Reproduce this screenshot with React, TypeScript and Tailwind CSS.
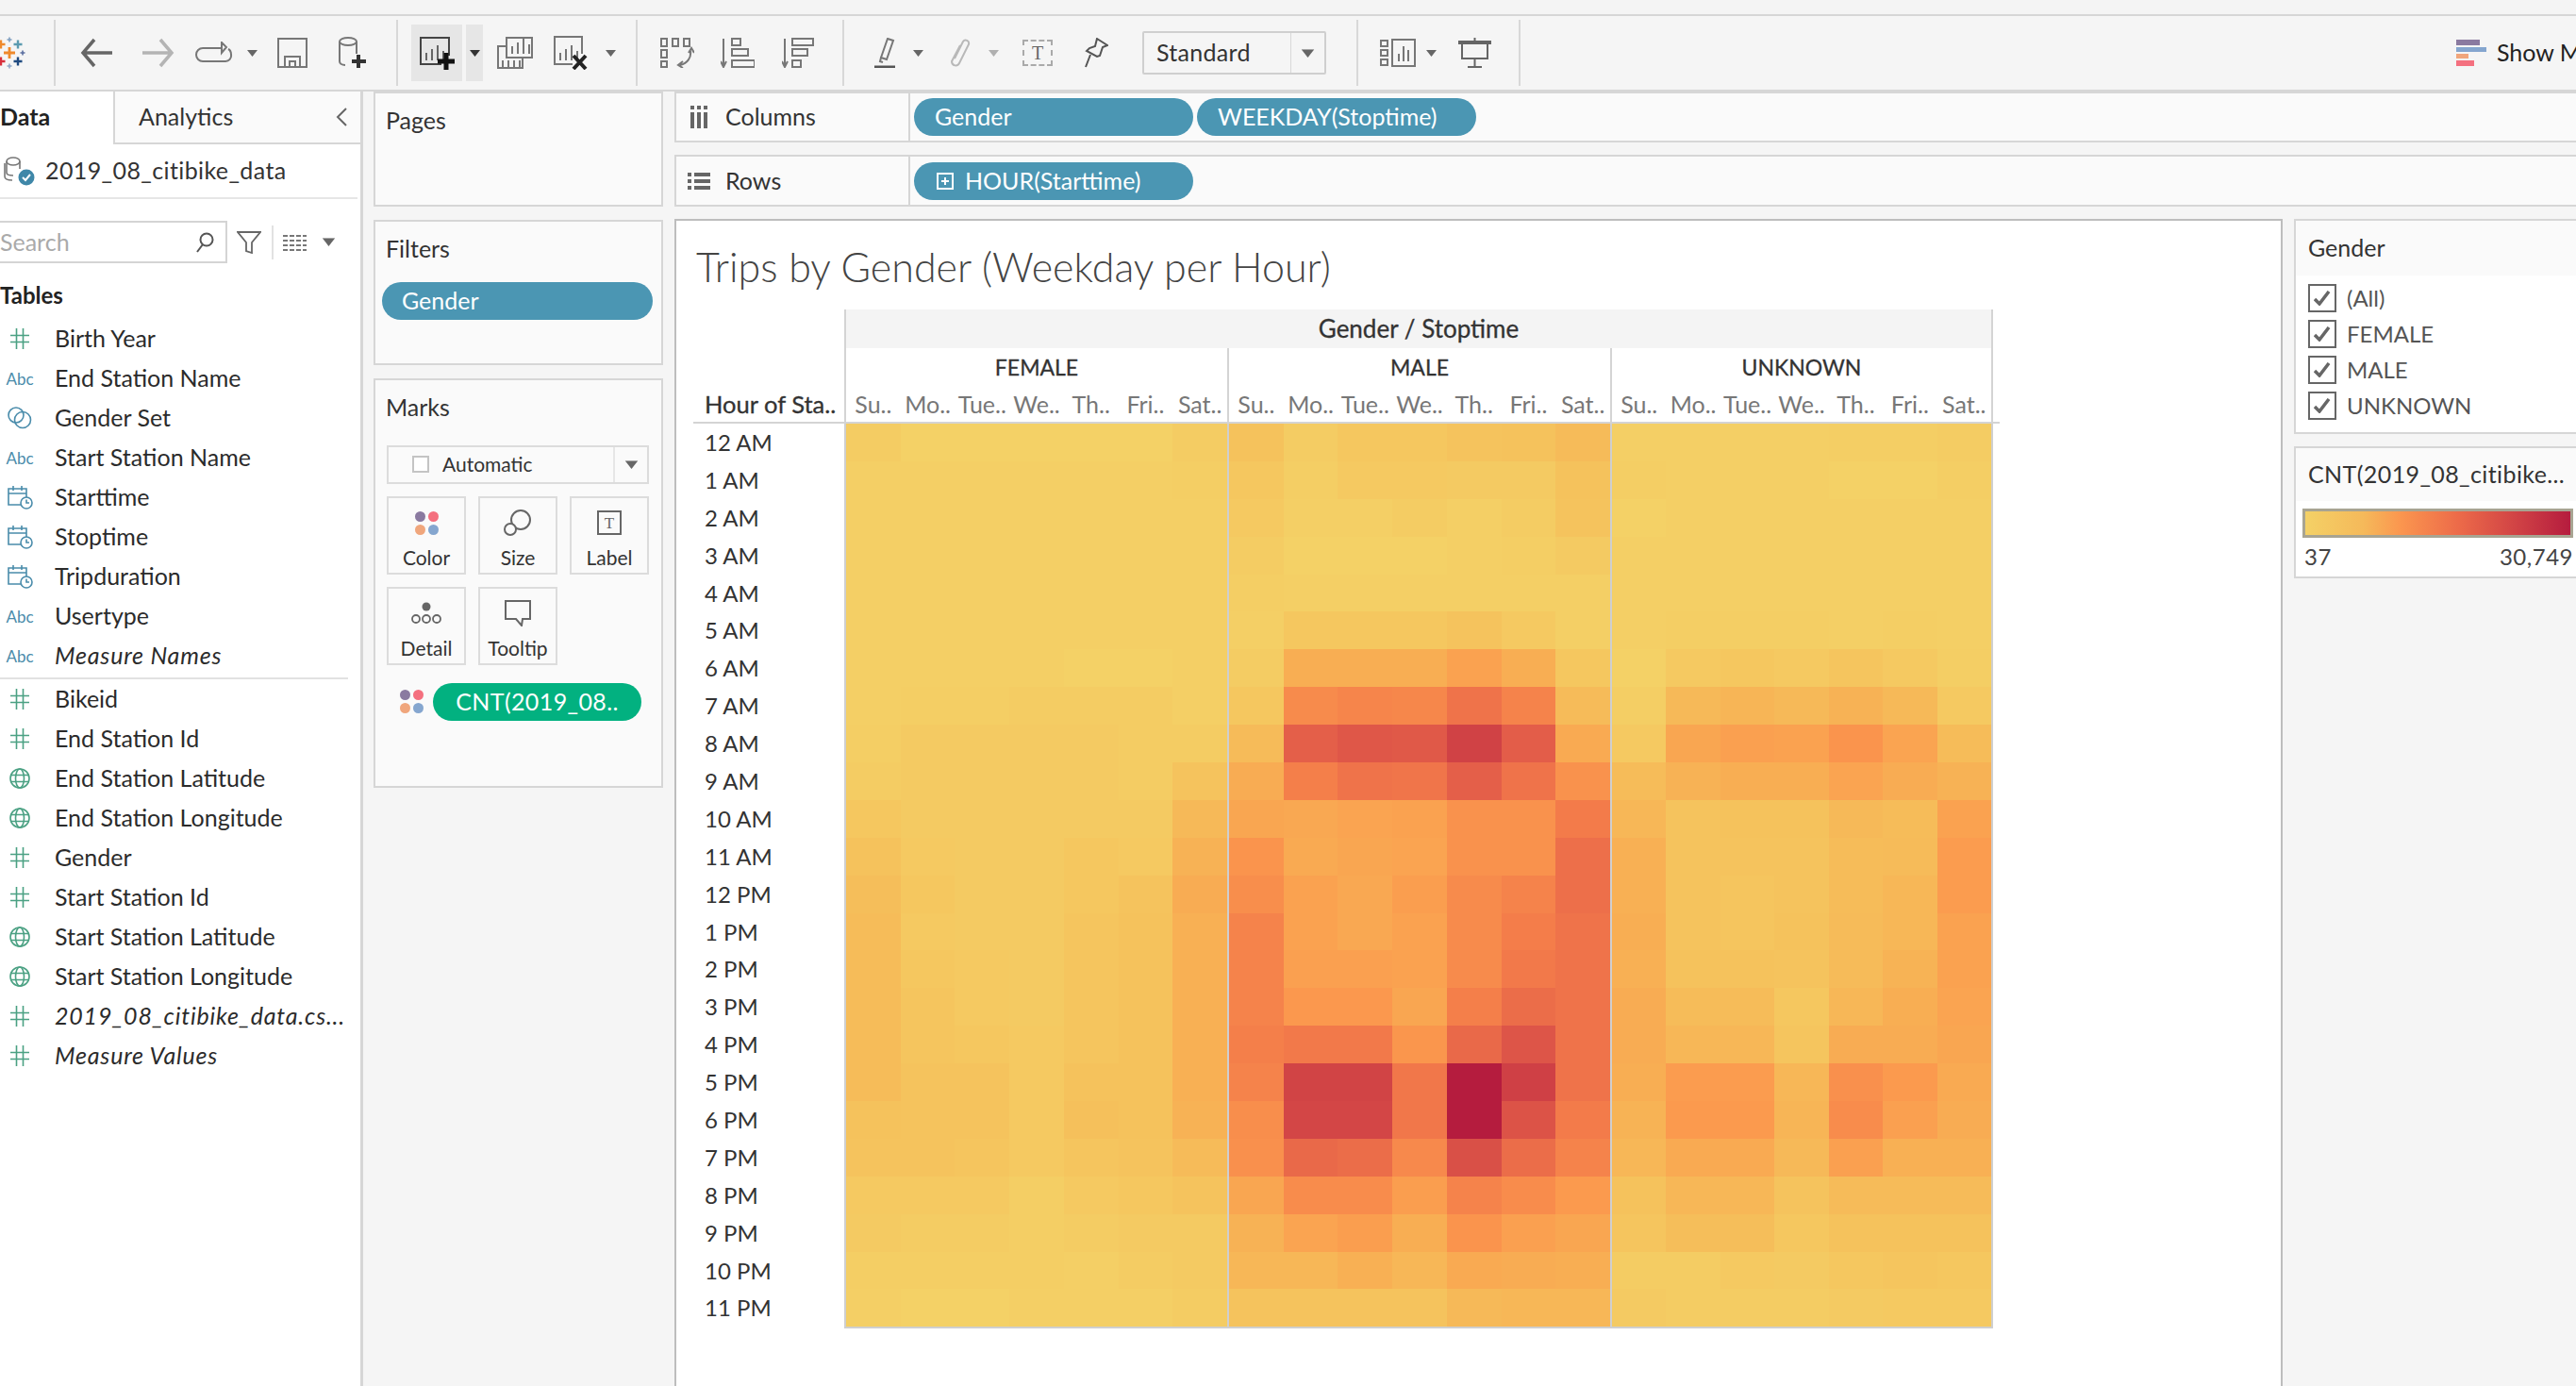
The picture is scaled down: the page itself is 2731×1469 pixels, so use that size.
import type { ReactNode } from 'react'

// value scale sampled from the legend, 0-100
const STOPS: Array<[number, number[]]> = [
  [0, [244, 209, 102]],
  [10, [245, 192, 91]],
  [20, [248, 174, 83]],
  [30, [251, 154, 78]],
  [45, [244, 125, 74]],
  [60, [228, 95, 73]],
  [75, [208, 66, 69]],
  [100, [181, 28, 62]],
]

function heat(v: number) {
  for (let i = 1; i < STOPS.length; i++) {
    const [b, cb] = STOPS[i]
    const [a, ca] = STOPS[i - 1]
    if (v <= b) {
      const t = (v - a) / (b - a)
      return `rgb(${ca.map((c, k) => Math.round(c + (cb[k] - c) * t)).join(',')})`
    }
  }
  return 'rgb(181,28,62)'
}

const FEMALE = [
  [3, 0, 0, 0, 0, 0, 3], [1, 1, 1, 1, 1, 1, 2], [1, 1, 1, 1, 1, 1, 1], [1, 1, 1, 1, 1, 1, 1],
  [1, 1, 1, 1, 1, 1, 1], [1, 1, 1, 1, 1, 1, 1], [1, 1, 1, 1, 0, 0, 1], [1, 2, 2, 3, 3, 3, 1],
  [2, 4, 4, 4, 4, 3, 3], [3, 4, 4, 4, 4, 3, 8], [6, 4, 4, 4, 4, 4, 14], [9, 5, 4, 4, 6, 5, 18],
  [11, 6, 4, 4, 6, 8, 21], [12, 5, 4, 4, 7, 9, 19], [12, 6, 5, 4, 7, 9, 19], [12, 7, 5, 4, 7, 9, 19],
  [12, 7, 6, 5, 7, 9, 19], [12, 8, 8, 5, 9, 9, 19], [9, 8, 8, 5, 10, 9, 18], [8, 8, 7, 5, 7, 8, 13],
  [5, 5, 5, 2, 5, 6, 8], [4, 3, 3, 2, 3, 4, 4], [2, 2, 2, 2, 1, 3, 4], [1, 0, 0, 1, 1, 1, 3],
]
const MALE = [
  [9, 3, 6, 6, 8, 9, 13], [6, 2, 5, 5, 4, 4, 9], [5, 1, 1, 3, 1, 3, 8], [3, 0, 0, 0, 1, 2, 4],
  [2, 1, 1, 1, 1, 1, 1], [1, 6, 6, 6, 8, 5, 1], [3, 20, 20, 20, 26, 20, 6], [6, 38, 41, 40, 50, 42, 13],
  [13, 60, 64, 63, 75, 61, 22], [21, 44, 50, 49, 60, 50, 34], [24, 23, 25, 26, 34, 34, 46], [33, 22, 24, 25, 34, 34, 52],
  [36, 26, 23, 28, 38, 42, 52], [42, 26, 23, 26, 38, 45, 50], [42, 27, 27, 26, 38, 47, 50], [42, 31, 31, 24, 44, 53, 50],
  [44, 47, 47, 32, 55, 65, 50], [42, 74, 74, 48, 100, 76, 50], [36, 73, 73, 48, 100, 66, 46], [35, 55, 53, 39, 68, 53, 42],
  [24, 37, 37, 28, 42, 37, 30], [18, 25, 28, 20, 33, 27, 24], [15, 15, 19, 15, 22, 21, 20], [8, 8, 8, 8, 14, 15, 15],
]
const UNKNOWN = [
  [1, 1, 1, 1, 2, 2, 3], [2, 1, 1, 1, 0, 0, 2], [0, 1, 1, 1, 1, 1, 1], [1, 1, 1, 1, 1, 1, 1],
  [1, 1, 1, 1, 1, 1, 1], [1, 2, 2, 2, 1, 2, 1], [0, 5, 6, 5, 7, 5, 2], [2, 14, 16, 14, 18, 14, 5],
  [5, 24, 27, 26, 33, 25, 12], [12, 18, 20, 20, 25, 21, 18], [15, 8, 9, 9, 14, 12, 26], [19, 8, 8, 8, 12, 13, 29],
  [19, 8, 7, 8, 12, 15, 29], [20, 8, 7, 9, 13, 15, 26], [19, 9, 9, 8, 13, 17, 26], [21, 12, 12, 6, 15, 20, 25],
  [21, 15, 15, 7, 21, 21, 24], [20, 29, 29, 15, 35, 30, 22], [17, 30, 30, 16, 37, 27, 21], [15, 22, 22, 14, 27, 19, 19],
  [9, 15, 15, 8, 13, 13, 13], [7, 11, 11, 6, 9, 9, 9], [3, 3, 5, 4, 6, 7, 6], [4, 3, 3, 3, 4, 5, 5],
]

const HOURS = ['12 AM', '1 AM', '2 AM', '3 AM', '4 AM', '5 AM', '6 AM', '7 AM', '8 AM', '9 AM', '10 AM', '11 AM', '12 PM', '1 PM', '2 PM', '3 PM', '4 PM', '5 PM', '6 PM', '7 PM', '8 PM', '9 PM', '10 PM', '11 PM']
const DAYS = ['Su..', 'Mo..', 'Tue..', 'We..', 'Th..', 'Fri..', 'Sat..']

type FieldIcon = 'hash' | 'abc' | 'set' | 'date' | 'geo'

const DIMENSIONS: Array<{ icon: FieldIcon; label: string; italic?: boolean }> = [
  { icon: 'hash', label: 'Birth Year' },
  { icon: 'abc', label: 'End Station Name' },
  { icon: 'set', label: 'Gender Set' },
  { icon: 'abc', label: 'Start Station Name' },
  { icon: 'date', label: 'Starttime' },
  { icon: 'date', label: 'Stoptime' },
  { icon: 'date', label: 'Tripduration' },
  { icon: 'abc', label: 'Usertype' },
  { icon: 'abc', label: 'Measure Names', italic: true },
]
const MEASURES: Array<{ icon: FieldIcon; label: string; italic?: boolean }> = [
  { icon: 'hash', label: 'Bikeid' },
  { icon: 'hash', label: 'End Station Id' },
  { icon: 'geo', label: 'End Station Latitude' },
  { icon: 'geo', label: 'End Station Longitude' },
  { icon: 'hash', label: 'Gender' },
  { icon: 'hash', label: 'Start Station Id' },
  { icon: 'geo', label: 'Start Station Latitude' },
  { icon: 'geo', label: 'Start Station Longitude' },
  { icon: 'hash', label: '2019_08_citibike_data.cs...', italic: true },
  { icon: 'hash', label: 'Measure Values', italic: true },
]

function Sep({ className }: { className: string }) {
  return <div className={`h-[70px] w-[2px] shrink-0 bg-[#d8d8d8] ${className}`} />
}

function Caret({ className = '', color = '#666' }: { className?: string; color?: string }) {
  return (
    <svg width="11" height="7" viewBox="0 0 11 7" className={`shrink-0 ${className}`}>
      <path d="M0 0h11L5.5 7z" fill={color} />
    </svg>
  )
}

function Logo() {
  const plus = (x: number, y: number, s: number, c: string, w = 2.4) => (
    <path key={`${x}-${y}`} d={`M${x - s} ${y}h${s * 2}M${x} ${y - s}v${s * 2}`} stroke={c} strokeWidth={w} fill="none" />
  )
  return (
    <svg width="34" height="34" viewBox="0 0 34 34" className="-ml-[7px] shrink-0">
      {plus(17, 17, 6, '#ef8a2c', 2.8)}
      {plus(26, 8, 4.5, '#5b9bb0')}
      {plus(8, 8, 4.5, '#ef8a2c')}
      {plus(17, 3, 2.5, '#7f9fc0', 1.6)}
      {plus(31, 17, 2.5, '#5b6fa0', 1.6)}
      {plus(3, 17, 2.5, '#e0a030', 1.6)}
      {plus(8, 26, 4.5, '#d8303c')}
      {plus(26, 26, 4.5, '#1f4a80')}
      {plus(17, 31, 2.5, '#8fa8c8', 1.6)}
    </svg>
  )
}

function BarChartGlyph({ x, y, color = '#555' }: { x: number; y: number; color?: string }) {
  return (
    <path
      d={`M${x} ${y + 14}v-8M${x + 6} ${y + 14}v-12M${x + 12} ${y + 14}v-16M${x + 18} ${y + 14}v-10`}
      stroke={color}
      strokeWidth="2"
      fill="none"
    />
  )
}

function Toolbar() {
  return (
    <div className="flex h-[80px] shrink-0 items-center border-b-2 border-[#d6d6d6] bg-[#f5f5f5]">
      <Logo />
      <Sep className="ml-[30px]" />
      {/* back / forward */}
      <svg width="36" height="32" viewBox="0 0 36 32" className="ml-[26px] shrink-0" fill="none" stroke="#666" strokeWidth="3.5">
        <path d="M34 16H3M15 2 3 16l12 14" />
      </svg>
      <svg width="36" height="32" viewBox="0 0 36 32" className="ml-[28px] shrink-0" fill="none" stroke="#b4b4b4" strokeWidth="3.5">
        <path d="M2 16h31M21 2l12 14-12 14" />
      </svg>
      <svg width="42" height="24" viewBox="0 0 42 24" className="ml-[21px] shrink-0" fill="none" stroke="#777" strokeWidth="2">
        <path d="M29 7H9a6 6 0 0 0 0 14h24a6 6 0 0 0 6-7c0-3-1-5-3-6M29 1v11l5-6z" />
      </svg>
      <Caret className="ml-[14px]" />
      {/* save */}
      <svg width="32" height="32" viewBox="0 0 32 32" className="ml-[21px] shrink-0" fill="none" stroke="#777" strokeWidth="2">
        <path d="M1 1h30v30H1zM8 31V20h16v11M13 31v-6h6v6" />
      </svg>
      {/* new data source */}
      <svg width="30" height="34" viewBox="0 0 30 34" className="ml-[32px] shrink-0" fill="none" stroke="#777" strokeWidth="2">
        <ellipse cx="11" cy="5" rx="9" ry="4" />
        <path d="M2 5v21c0 2 2 4 6 4M20 5v13" />
        <path d="M22 19v14M15 26h15" stroke="#333" strokeWidth="4" />
      </svg>
      <Sep className="ml-[32px]" />
      {/* new worksheet */}
      <div className="ml-[14px] flex h-[60px] w-[54px] shrink-0 items-center justify-center bg-[#e6e6e6]">
        <svg width="38" height="36" viewBox="0 0 38 36" fill="none">
          <path d="M24 30H2V2h30v19" stroke="#444" strokeWidth="2" />
          <BarChartGlyph x={8} y={12} color="#666" />
          <path d="M29 18v18M20 27h18" stroke="#111" strokeWidth="5" />
        </svg>
      </div>
      <div className="ml-[4px] flex h-[60px] w-[18px] shrink-0 items-center justify-center bg-[#e6e6e6]">
        <Caret color="#333" />
      </div>
      {/* duplicate */}
      <svg width="38" height="34" viewBox="0 0 38 34" className="ml-[15px] shrink-0" fill="none" stroke="#777" strokeWidth="2">
        <path d="M10 1h27v21H10zM10 10H1v23h26V22" />
        <BarChartGlyph x={16} y={4} color="#777" />
        <path d="M6 32v-7M12 32v-7M18 32v-7M24 32v-7" />
      </svg>
      {/* clear */}
      <svg width="38" height="36" viewBox="0 0 38 36" className="ml-[22px] shrink-0" fill="none">
        <path d="M20 30H1V1h29v18" stroke="#777" strokeWidth="2" />
        <BarChartGlyph x={7} y={12} color="#777" />
        <path d="M21 21l13 14M34 21 21 35" stroke="#222" strokeWidth="4" />
      </svg>
      <Caret className="ml-[17px]" />
      <Sep className="ml-[21px]" />
      {/* swap */}
      <svg width="36" height="32" viewBox="0 0 36 32" className="ml-[24px] shrink-0" fill="none" stroke="#777" strokeWidth="2">
        <path d="M1 1h6v8H1zM13 1h6v8h-6zM25 1h6v8h-6zM1 13h6v8H1zM1 25h6v6H1z" />
        <path d="M32 14c1 7-3 13-11 15M30 16l3-5 3 5M24 25l-5 4 5 3" />
      </svg>
      {/* sort ascending */}
      <svg width="36" height="32" viewBox="0 0 36 32" className="ml-[28px] shrink-0" fill="none" stroke="#777" strokeWidth="2">
        <path d="M3 1v29M0 25l3 6 3-6" />
        <path d="M12 1h9v7h-9zM12 12h17v7H12zM12 24h24v7H12z" />
      </svg>
      {/* sort descending */}
      <svg width="34" height="32" viewBox="0 0 34 32" className="ml-[29px] shrink-0" fill="none" stroke="#777" strokeWidth="2">
        <path d="M3 1v29M0 25l3 6 3-6" />
        <path d="M11 1h22v7H11zM11 12h16v7H11zM11 24h9v7h-9z" />
      </svg>
      <Sep className="ml-[30px]" />
      {/* highlight */}
      <svg width="22" height="32" viewBox="0 0 22 32" className="ml-[32px] shrink-0" fill="none" stroke="#777" strokeWidth="2">
        <path d="M14 1l6 2-7 20-6-2zM7 21l-1 4 3 1" />
        <path d="M0 31h22" stroke="#555" strokeWidth="3" />
      </svg>
      <Caret className="ml-[19px]" />
      {/* annotate */}
      <svg width="24" height="32" viewBox="0 0 24 32" className="ml-[26px] shrink-0" fill="none" stroke="#b8b8b8" strokeWidth="2">
        <path d="M7 22 16 4c2-3 7-1 6 3L12 27c-2 4-8 3-8-2L13 8" />
      </svg>
      <Caret className="ml-[19px]" color="#b0b0b0" />
      {/* text box */}
      <div className="ml-[25px] flex h-[28px] w-[32px] shrink-0 items-center justify-center border-2 border-dashed border-[#aaa] font-['Liberation_Serif',serif] text-[20px] leading-none text-[#666]">
        T
      </div>
      {/* pin */}
      <svg width="26" height="32" viewBox="0 0 26 32" className="ml-[33px] shrink-0" fill="none" stroke="#555" strokeWidth="2">
        <path d="M14 1l11 7-5 2-3 9-3 1-11-6 3-3 6-2zM7 18l-5 13" />
      </svg>
      {/* view size */}
      <div className="ml-[36px] flex h-[46px] w-[195px] shrink-0 items-center rounded-[2px] border-2 border-[#cfcfcf] text-[25px] text-[#333]">
        <span className="ml-[13px] flex-1 tracking-[0.3px]">Standard</span>
        <div className="flex h-full w-[36px] items-center justify-center border-l border-[#d8d8d8]">
          <Caret className="scale-125" />
        </div>
      </div>
      <Sep className="ml-[32px]" />
      {/* show cards */}
      <svg width="38" height="30" viewBox="0 0 38 30" className="ml-[23px] shrink-0" fill="none" stroke="#777" strokeWidth="2">
        <path d="M1 2h7v6H1zM1 12h7v6H1zM1 22h7v6H1zM13 1h24v28H13z" />
        <path d="M20 24v-8M25 24V8M30 24V12" />
      </svg>
      <Caret className="ml-[11px]" />
      {/* presentation */}
      <svg width="35" height="32" viewBox="0 0 35 32" className="ml-[23px] shrink-0" fill="none" stroke="#666" strokeWidth="2">
        <path d="M0 5h35" strokeWidth="4" />
        <path d="M17.5 0v4M4 6v16h27V6M17.5 22v9M10 31h15" />
      </svg>
      <Sep className="ml-[29px]" />
      {/* show me */}
      <div className="ml-[992px] flex shrink-0 items-center">
        <div className="flex w-[32px] flex-col gap-[2px]">
          <div className="h-[6px] w-[25px] bg-[#8a7aa0]" />
          <div className="h-[5px] w-[32px] bg-[#85a6cf]" />
          <div className="h-[5px] w-[13px] bg-[#f0a67c]" />
          <div className="h-[6px] w-[19px] bg-[#f4707f]" />
        </div>
        <span className="ml-[11px] whitespace-nowrap text-[25px] text-[#222]">Show Me</span>
      </div>
    </div>
  )
}

function FieldGlyph({ icon }: { icon: FieldIcon }) {
  const green = '#4ba183'
  const blue = '#4a8cab'
  if (icon === 'abc') {
    return <span className="text-[17px] leading-none text-[#4a8cab]">Abc</span>
  }
  if (icon === 'hash') {
    return (
      <svg width="20" height="22" viewBox="0 0 20 22" fill="none" stroke={green} strokeWidth="1.6">
        <path d="M0 7.5h20M0 14.5h20M6.5 0v22M13.5 0v22" />
      </svg>
    )
  }
  if (icon === 'geo') {
    return (
      <svg width="22" height="22" viewBox="0 0 22 22" fill="none" stroke={green} strokeWidth="1.6">
        <circle cx="11" cy="11" r="10" />
        <ellipse cx="11" cy="11" rx="4.5" ry="10" />
        <path d="M1.5 7.5h19M1.5 14.5h19" />
      </svg>
    )
  }
  if (icon === 'set') {
    return (
      <svg width="26" height="24" viewBox="0 0 26 24" fill="none" stroke={blue} strokeWidth="1.6">
        <circle cx="9" cy="9" r="8" />
        <circle cx="16" cy="14" r="8.5" />
      </svg>
    )
  }
  return (
    <svg width="28" height="26" viewBox="0 0 28 26" fill="none" stroke={blue} strokeWidth="1.6">
      <path d="M16 21H2V4h19v10M2 9h19M7 1v5M16 1v5" />
      <circle cx="21" cy="19" r="6" fill="#fff" />
      <path d="M21 15.5V19h3" />
    </svg>
  )
}

function FieldRow({ icon, label, italic }: { icon: FieldIcon; label: string; italic?: boolean }) {
  return (
    <div className="flex h-[42px] items-center">
      <div className="flex w-[42px] shrink-0 items-center justify-center">
        <FieldGlyph icon={icon} />
      </div>
      <span className={`ml-[16px] whitespace-nowrap text-[25px] text-[#2b2b2b] ${italic ? 'italic tracking-[0.8px]' : ''}`}>{label}</span>
    </div>
  )
}

function DataPane() {
  return (
    <div className="flex w-[385px] shrink-0 flex-col border-r-[3px] border-[#d6d6d6] bg-white">
      <div className="flex h-[56px] shrink-0">
        <div className="flex w-[120px] items-center pb-[2px] text-[25px] font-bold text-[#222]">Data</div>
        <div className="flex flex-1 items-center justify-between border-b-2 border-l-2 border-[#d6d6d6] bg-[#fafafa] pl-[25px] pr-[14px] text-[25px] text-[#333]">
          Analytics
          <svg width="12" height="20" viewBox="0 0 12 20" fill="none" stroke="#666" strokeWidth="2">
            <path d="M11 1 2 10l9 9" />
          </svg>
        </div>
      </div>
      <div className="mr-[3px] flex h-[58px] shrink-0 items-center border-b-2 border-[#e6e6e6]">
        <svg width="34" height="32" viewBox="0 0 34 32" className="ml-[3px] shrink-0" fill="none" stroke="#777" strokeWidth="1.6">
          <ellipse cx="11" cy="6" rx="7" ry="4" />
          <path d="M4 6v12c0 2 3 3 7 3M18 6v8M2 8v14c0 3 3 4 8 4" />
          <circle cx="25" cy="23" r="8.5" fill="#3f87a8" stroke="none" />
          <path d="m21 23 3 3 5-6" stroke="#fff" strokeWidth="2" />
        </svg>
        <span className="ml-[11px] text-[25px] tracking-[0.4px] text-[#333]">2019_08_citibike_data</span>
      </div>
      {/* search and view controls */}
      <div className="mt-[23px] flex h-[45px] shrink-0 items-center">
        <div className="flex h-full w-[241px] shrink-0 items-center justify-between border-y-2 border-r-2 border-[#d4d4d4] pr-[12px] text-[25px] text-[#aaa]">
          Search
          <svg width="20" height="22" viewBox="0 0 20 22" fill="none" stroke="#555" strokeWidth="2">
            <circle cx="12" cy="8" r="6.5" />
            <path d="M8 13 2 21" />
          </svg>
        </div>
        <svg width="26" height="24" viewBox="0 0 26 24" className="ml-[10px] shrink-0" fill="none" stroke="#666" strokeWidth="1.8">
          <path d="M1 1h24L16 12v11l-6-2v-9z" />
        </svg>
        <div className="ml-[11px] h-[36px] w-[2px] shrink-0 bg-[#e2e2e2]" />
        <svg width="25" height="18" viewBox="0 0 25 18" className="ml-[10px] shrink-0" fill="none" stroke="#777" strokeWidth="2" strokeDasharray="5 2">
          <path d="M0 2h25M0 7h25M0 12h25M0 17h25" />
        </svg>
        <Caret className="ml-[18px] scale-125" />
      </div>
      <div className="mt-[20px] flex h-[28px] shrink-0 items-center text-[24px] font-bold text-[#222]">Tables</div>
      <div className="mt-[11px] flex flex-col">
        {DIMENSIONS.map((f) => (
          <FieldRow key={f.label} {...f} />
        ))}
      </div>
      <div className="mr-[13px] mt-[2px] h-[2px] bg-[#e2e2e2]" />
      <div className="flex flex-col">
        {MEASURES.map((f) => (
          <FieldRow key={f.label} {...f} />
        ))}
      </div>
    </div>
  )
}

function Pill({ children, className }: { children: ReactNode; className: string }) {
  return (
    <div className={`flex h-[40px] shrink-0 items-center rounded-[20px] bg-[#4b96b3] text-[25px] whitespace-nowrap text-white ${className}`}>
      {children}
    </div>
  )
}

function FourDots() {
  return (
    <div className="grid w-[25px] grid-cols-2 gap-[3px]">
      <div className="size-[11px] rounded-full bg-[#8a7aa0]" />
      <div className="size-[11px] rounded-full bg-[#f4707f]" />
      <div className="size-[11px] rounded-full bg-[#f0a67c]" />
      <div className="size-[11px] rounded-full bg-[#85a6cf]" />
    </div>
  )
}

function MarkButton({ label, children }: { label: string; children: ReactNode }) {
  return (
    <div className="flex h-[83px] w-[84px] flex-col items-center border-2 border-[#dcdcdc] text-[21px] text-[#333]">
      <div className="flex h-[46px] items-center justify-center pt-[8px]">{children}</div>
      <span className="mt-[2px]">{label}</span>
    </div>
  )
}

function SideCards() {
  return (
    <div className="ml-[11px] flex w-[307px] shrink-0 flex-col">
      <div className="h-[122px] shrink-0 border-2 border-[#d6d6d6] bg-[#fafafa] pl-[11px] pt-[10px] text-[25px] text-[#333]">Pages</div>
      <div className="mt-[14px] h-[154px] shrink-0 border-2 border-[#d6d6d6] bg-[#fafafa] text-[25px] text-[#333]">
        <div className="pl-[11px] pt-[10px]">Filters</div>
        <Pill className="ml-[7px] mt-[16px] w-[287px] pl-[21px]">Gender</Pill>
      </div>
      <div className="mt-[14px] h-[434px] shrink-0 border-2 border-[#d6d6d6] bg-[#fafafa] text-[#333]">
        <div className="pl-[11px] pt-[10px] text-[25px]">Marks</div>
        <div className="ml-[12px] mt-[21px] flex h-[41px] w-[278px] items-center border-2 border-[#dcdcdc] text-[21px]">
          <div className="ml-[25px] size-[18px] border-2 border-[#c4c4c4] bg-white" />
          <span className="ml-[14px] flex-1">Automatic</span>
          <div className="flex h-full w-[36px] items-center justify-center border-l-2 border-[#e6e6e6]">
            <Caret className="scale-125" />
          </div>
        </div>
        <div className="ml-[12px] mt-[13px] grid w-[278px] grid-cols-[84px_84px_84px] gap-x-[13px] gap-y-[13px]">
          <MarkButton label="Color">
            <FourDots />
          </MarkButton>
          <MarkButton label="Size">
            <svg width="30" height="28" viewBox="0 0 30 28" fill="none" stroke="#666" strokeWidth="2">
              <circle cx="18" cy="11" r="10" />
              <circle cx="7" cy="21" r="6" fill="#fafafa" />
            </svg>
          </MarkButton>
          <MarkButton label="Label">
            <div className="flex size-[26px] items-center justify-center border-2 border-[#666] font-['Liberation_Serif',serif] text-[17px] leading-none text-[#666]">T</div>
          </MarkButton>
          <MarkButton label="Detail">
            <svg width="32" height="24" viewBox="0 0 32 24" fill="none" stroke="#666" strokeWidth="1.8">
              <circle cx="16" cy="5" r="4.5" fill="#666" stroke="none" />
              <circle cx="5" cy="18" r="4" />
              <circle cx="16" cy="18" r="4" />
              <circle cx="27" cy="18" r="4" />
            </svg>
          </MarkButton>
          <MarkButton label="Tooltip">
            <svg width="28" height="28" viewBox="0 0 28 28" fill="none" stroke="#666" strokeWidth="2">
              <path d="M1 1h26v19h-8l-1 7-6-7H1z" />
            </svg>
          </MarkButton>
        </div>
        <div className="mt-[19px] flex items-center">
          <div className="ml-[26px] w-[25px]">
            <FourDots />
          </div>
          <Pill className="ml-[10px] w-[221px] justify-center bg-[#02b180]! tracking-[0.4px]">CNT(2019_08..</Pill>
        </div>
      </div>
    </div>
  )
}

function Shelf({ icon, label, children, className }: { icon: ReactNode; label: string; children: ReactNode; className: string }) {
  return (
    <div className={`flex shrink-0 border-y-2 border-l-2 border-[#d6d6d6] bg-[#fafafa] ${className}`}>
      <div className="flex w-[248px] shrink-0 items-center border-r-2 border-[#d6d6d6] text-[25px] text-[#333]">
        <div className="ml-[12px] flex w-[24px] justify-center">{icon}</div>
        <span className="ml-[16px]">{label}</span>
      </div>
      <div className="ml-[4px] flex items-center gap-[4px]">{children}</div>
    </div>
  )
}

function Pane({ data, last }: { data: number[][]; last?: boolean }) {
  return (
    <div className={`grid w-[406px] shrink-0 grid-cols-7 border-l-2 border-[#cfcfcf] ${last ? 'border-r-2' : ''}`}>
      {data.flat().map((v, i) => (
        <div key={i} className="h-[39.9px]" style={{ backgroundColor: heat(v) }} />
      ))}
    </div>
  )
}

function Heatmap() {
  const panes = ['FEMALE', 'MALE', 'UNKNOWN']
  return (
    <div className="ml-[18px] mt-[20px] flex w-[1385px] flex-col">
      {/* header band */}
      <div className="flex h-[41px]">
        <div className="w-[160px] shrink-0" />
        <div className="flex w-[1218px] items-center justify-center border-x-2 border-[#d4d4d4] bg-[#f4f4f4] text-[26px] text-[#333] [-webkit-text-stroke:0.3px_#333]">
          Gender / Stoptime
        </div>
      </div>
      <div className="flex h-[41px]">
        <div className="w-[160px] shrink-0" />
        {panes.map((p, i) => (
          <div key={p} className={`flex w-[406px] items-center justify-center border-l-2 border-[#d4d4d4] text-[23px] text-[#333] [-webkit-text-stroke:0.3px_#333] ${i === 2 ? 'border-r-2' : ''}`}>
            {p}
          </div>
        ))}
      </div>
      <div className="flex h-[39px] border-b-2 border-[#d4d4d4]">
        <div className="flex w-[160px] shrink-0 items-center pl-[12px] text-[25.5px] whitespace-nowrap text-[#333] [-webkit-text-stroke:0.3px_#333]">Hour of Sta..</div>
        {panes.map((p, i) => (
          <div key={p} className={`grid w-[406px] grid-cols-7 items-center border-l-2 border-[#d4d4d4] text-center text-[25px] whitespace-nowrap text-[#777] ${i === 2 ? 'border-r-2' : ''}`}>
            {DAYS.map((d) => (
              <span key={d}>{d}</span>
            ))}
          </div>
        ))}
      </div>
      {/* body */}
      <div className="flex">
        <div className="w-[160px] shrink-0 pl-[12px] text-[24px] text-[#333]">
          {HOURS.map((h) => (
            <div key={h} className="flex h-[39.9px] items-center">{h}</div>
          ))}
        </div>
        <div className="flex w-[1218px] border-b-2 border-[#cfcfcf]">
          <Pane data={FEMALE} />
          <Pane data={MALE} />
          <Pane data={UNKNOWN} last />
        </div>
      </div>
    </div>
  )
}

function Legend() {
  return (
    <div className="ml-[12px] flex w-[310px] shrink-0 flex-col">
      <div className="h-[228px] border-2 border-[#d6d6d6] bg-white">
        <div className="flex h-[58px] items-center bg-[#fafafa] pl-[13px] text-[25px] text-[#333]">Gender</div>
        <div className="flex flex-col pl-[13px] pt-[5px]">
          {['(All)', 'FEMALE', 'MALE', 'UNKNOWN'].map((g) => (
            <div key={g} className="flex h-[38px] items-center text-[24px] text-[#555]">
              <div className="flex size-[30px] items-center justify-center border-2 border-[#666] bg-white">
                <svg width="18" height="16" viewBox="0 0 18 16" fill="none" stroke="#666" strokeWidth="3.5">
                  <path d="m1 9 5 5L16 1" />
                </svg>
              </div>
              <span className="ml-[11px]">{g}</span>
            </div>
          ))}
        </div>
      </div>
      <div className="mt-[13px] h-[140px] border-2 border-[#d6d6d6] bg-white">
        <div className="flex h-[56px] items-center whitespace-nowrap bg-[#fafafa] pl-[13px] text-[25px] tracking-[0.4px] text-[#333]">CNT(2019_08_citibike...</div>
        <div className="ml-[7px] mt-[8px] h-[31px] w-[287px] border-[3px] border-[#a8a492] bg-[linear-gradient(to_right,#f4d166,#f5b95a_22%,#fb964f_36%,#ec6a49_58%,#d04245_80%,#b51c3e)]" />
        <div className="ml-[9px] mt-[2px] flex w-[285px] justify-between text-[24px] tracking-[0.5px] text-[#444]">
          <span>37</span>
          <span>30,749</span>
        </div>
      </div>
    </div>
  )
}

export default function App() {
  return (
    <div className="flex h-[1469px] w-[2731px] flex-col overflow-hidden bg-[#f5f5f5] font-[Lato,sans-serif]">
      <div className="h-[17px] shrink-0 border-b-2 border-[#d6d6d6] bg-[#f4f4f4]" />
      <Toolbar />
      <div className="flex min-h-0 flex-1">
        <DataPane />
        <SideCards />
        <div className="ml-[12px] flex min-w-0 flex-1 flex-col">
          <Shelf
            className="mb-[13px] h-[54px]"
            label="Columns"
            icon={
              <svg width="20" height="24" viewBox="0 0 20 24" fill="#666">
                <path d="M1 0h4v4H1zM8 0h4v4H8zM15 0h4v4h-4zM1 7h4v17H1zM8 7h4v17H8zM15 7h4v17h-4z" />
              </svg>
            }
          >
            <Pill className="w-[296px] pl-[22px]">Gender</Pill>
            <Pill className="w-[296px] pl-[22px]">WEEKDAY(Stoptime)</Pill>
          </Shelf>
          <Shelf
            className="mb-[13px] h-[55px]"
            label="Rows"
            icon={
              <svg width="24" height="20" viewBox="0 0 24 20" fill="#666">
                <path d="M0 1h4v4H0zM7 1h17v4H7zM0 8h4v4H0zM7 8h17v4H7zM0 15h4v4H0zM7 15h17v4H7z" />
              </svg>
            }
          >
            <Pill className="w-[296px] pl-[24px]">
              <svg width="18" height="18" viewBox="0 0 18 18" fill="none" stroke="#fff" strokeWidth="2" className="shrink-0">
                <path d="M1 1h16v16H1zM9 5v8M5 9h8" />
              </svg>
              <span className="ml-[12px]">HOUR(Starttime)</span>
            </Pill>
          </Shelf>
          <div className="flex min-h-0 flex-1">
            <div className="w-[1705px] shrink-0 border-x-2 border-t-2 border-[#bdbdbd] bg-white">
              <div className="ml-[21px] mt-[24px] h-[50px] text-[43px] leading-[50px] font-light whitespace-nowrap text-[#444]">Trips by Gender (Weekday per Hour)</div>
              <Heatmap />
            </div>
            <Legend />
          </div>
        </div>
      </div>
    </div>
  )
}
